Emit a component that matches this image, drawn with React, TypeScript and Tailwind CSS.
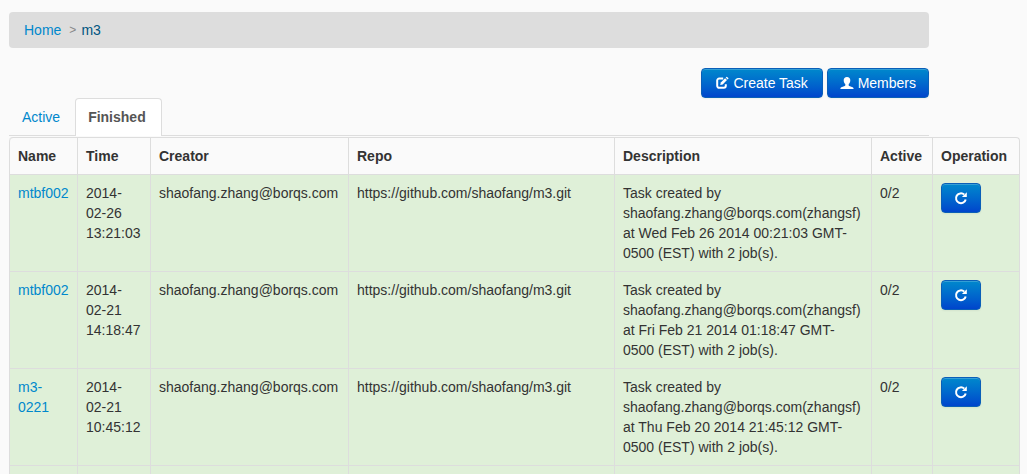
import React from 'react';

const tasks = [
  { name: 'mtbf002', time: '2014-02-26 13:21:03', stamp: 'Wed Feb 26 2014 00:21:03' },
  { name: 'mtbf002', time: '2014-02-21 14:18:47', stamp: 'Fri Feb 21 2014 01:18:47' },
  { name: 'm3-0221', time: '2014-02-21 10:45:12', stamp: 'Thu Feb 20 2014 21:45:12' },
];

const columns = ['Name', 'Time', 'Creator', 'Repo', 'Description', 'Active', 'Operation'];

const buttonStyle =
  'inline-flex h-[30px] items-center justify-center rounded border border-[#0a5fb8] bg-linear-to-b from-[#0088cc] to-[#0044cc] text-white shadow-[inset_0_1px_0_rgba(255,255,255,0.2),0_1px_2px_rgba(0,0,0,0.05)]';

function EditIcon() {
  return (
    <svg className="h-[14px] w-[14px]" viewBox="0 0 14 14" fill="none" aria-hidden="true">
      <path
        d="M8.200 2.500H4.200A2 2 0 0 0 2.200 4.500V9.800A2 2 0 0 0 4.200 11.800H8.800A2 2 0 0 0 10.800 9.800V8.200"
        stroke="currentColor"
        strokeWidth="2"
      />
      <path d="M5.200 9.100 5.800 6.500 10.100 2.200 12 4.100 7.700 8.400Z" fill="currentColor" />
      <path d="M10.700 1.600 11.400.9a.5.5 0 0 1 .7 0l1.200 1.200a.5.5 0 0 1 0 .7l-.7.7Z" fill="currentColor" />
    </svg>
  );
}

function UserIcon() {
  return (
    <svg className="h-[14px] w-[14px]" viewBox="0 0 14 14" fill="currentColor" aria-hidden="true">
      <path d="M7 1C4.700 1 3.700 2.400 3.700 4.200c0 1.700.7 3 1.600 3.900v1.100c0 .4-.2.600-.6.800l-3.300 1.300c-.7.300-1 .8-1 1.700h13.200c0-.9-.3-1.400-1-1.700L9.300 10c-.4-.2-.6-.4-.6-.8V8.100c.9-.9 1.600-2.200 1.600-3.900C10.300 2.400 9.300 1 7 1Z" />
    </svg>
  );
}

function RepeatIcon() {
  return (
    <svg className="h-[14px] w-[14px]" viewBox="0 0 14 14" fill="none" aria-hidden="true">
      <path
        d="M10.200 3.600A4.900 4.900 0 1 0 11.700 8.400"
        stroke="currentColor"
        strokeWidth="2"
      />
      <path d="M12.800 1.200V6H7.900Z" fill="currentColor" />
    </svg>
  );
}

export default function App() {
  return (
    <div className="bg-[#fafafa] pt-3 pr-[7px] pl-[9px] font-['Liberation_Sans',Arial,sans-serif] text-[14px] leading-5 text-[#333333]">
      <header className="max-w-[920px]">
        <nav aria-label="Breadcrumb" className="rounded bg-[#dddddd] px-[15px] py-2">
          <ol className="flex">
            <li className="flex">
              <a href="#home" className="text-[#0088cc]">Home</a>
              <span className="pr-[5px] pl-2 text-[12px] text-[#888888]">&gt;</span>
            </li>
            <li>
              <a href="#m3" className="text-[#005580]">m3</a>
            </li>
          </ol>
        </nav>
        <div className="mt-5 flex justify-end gap-1">
          <button type="button" className={`${buttonStyle} min-w-[122px] gap-1 px-3`}>
            <EditIcon />
            Create Task
          </button>
          <button type="button" className={`${buttonStyle} gap-1 px-3`}>
            <UserIcon />
            Members
          </button>
        </div>
        <nav aria-label="Task status" className="mb-px flex border-b border-[#dddddd]">
          <a href="#active" className="mr-0.5 border border-transparent px-3 pt-2 text-[#0088cc]">
            Active
          </a>
          <a
            href="#finished"
            aria-current="page"
            className="-mb-px min-w-[87px] rounded-t border border-b-0 border-[#dddddd] bg-white px-3 py-2 pb-[9px] font-bold text-[#555555]"
          >
            Finished
          </a>
        </nav>
      </header>
      <table className="w-full table-fixed border-separate border-spacing-0 rounded-t border-t border-r border-[#dddddd]">
        <colgroup>
          <col className="w-[68px]" />
          <col className="w-[73px]" />
          <col className="w-[198px]" />
          <col />
          <col className="w-[257px]" />
          <col className="w-[61px]" />
          <col className="w-[87px]" />
        </colgroup>
        <thead>
          <tr>
            {columns.map((c) => (
              <th key={c} scope="col" className="border-l border-[#dddddd] p-2 text-left font-bold first:rounded-tl">
                {c}
              </th>
            ))}
          </tr>
        </thead>
        <tbody className="bg-[#dff0d8] [&_td]:border-t [&_td]:border-l [&_td]:border-[#dddddd] [&_td]:align-top">
          {tasks.map((t) => (
            <tr key={t.time} className="[&_td]:p-2">
              <td>
                <a href="#task" className="text-[#0088cc]">{t.name}</a>
              </td>
              <td>{t.time}</td>
              <td>shaofang.zhang@borqs.com</td>
              <td>https://github.com/shaofang/m3.git</td>
              <td>
                {`Task created by shaofang.zhang@borqs.com(zhangsf) at ${t.stamp} GMT-0500 (EST) with 2 job(s).`}
              </td>
              <td>0/2</td>
              <td>
                <button type="button" aria-label="Repeat task" className={`${buttonStyle} w-10`}>
                  <RepeatIcon />
                </button>
              </td>
            </tr>
          ))}
          <tr>
            {columns.map((c) => (
              <td key={c} className="h-[9px]" />
            ))}
          </tr>
        </tbody>
      </table>
    </div>
  );
}
